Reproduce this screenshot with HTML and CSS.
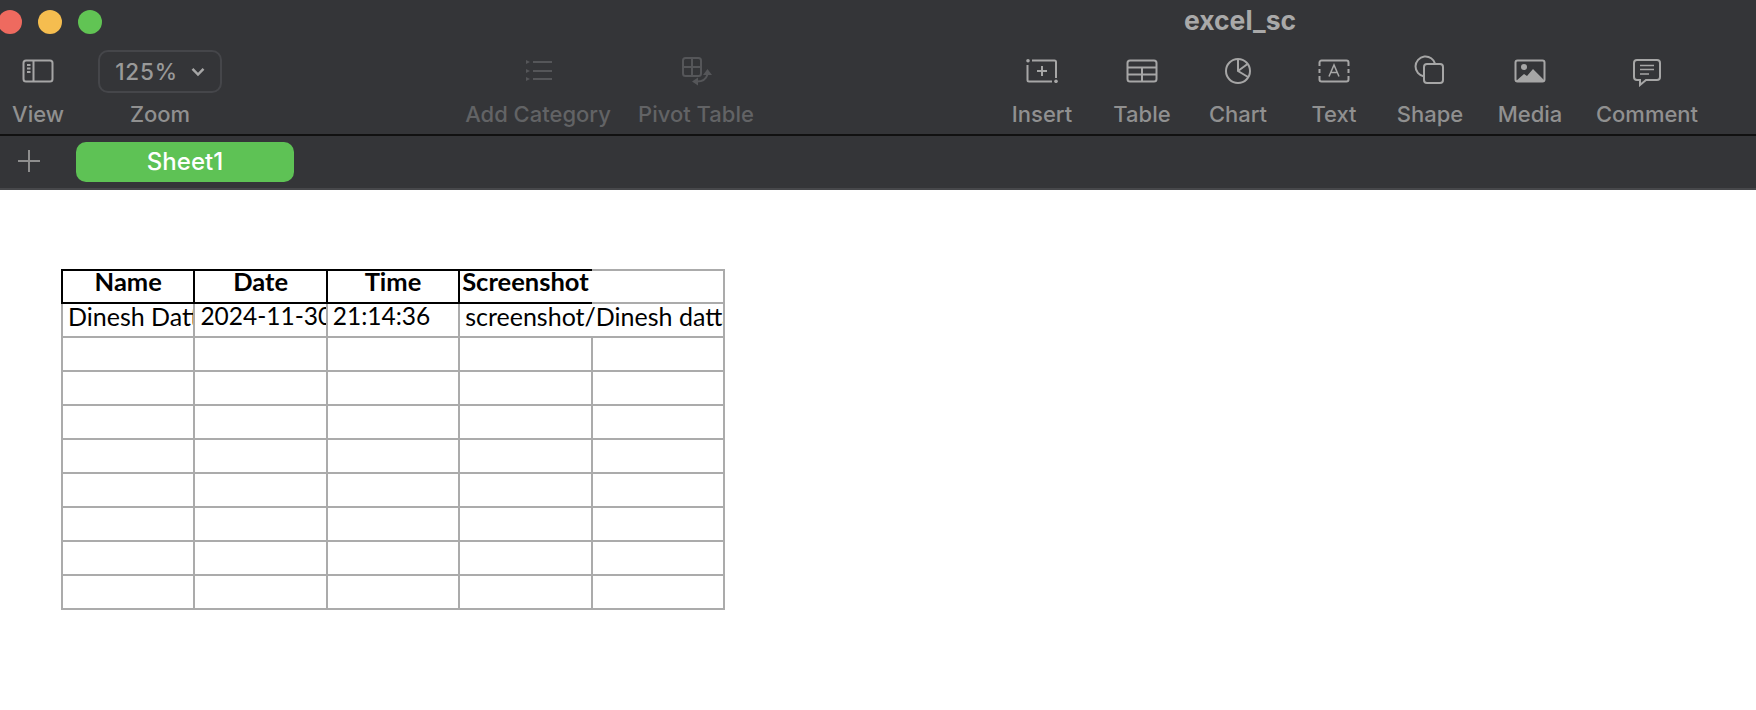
FILE: index.html
```html
<!DOCTYPE html>
<html lang="en">
<head>
    <meta charset="UTF-8">
    <meta name="viewport" content="width=device-width, initial-scale=1.0">
    <title>excel_sc</title>
    <link rel="stylesheet" href="styles.css">
</head>
<body>
    <header class="window-top">
        <div class="titlebar">
            <div class="lights">
                <span class="light red"></span>
                <span class="light yellow"></span>
                <span class="light green"></span>
            </div>
            <div class="doc-title">excel_sc</div>
        </div>
        <div class="toolbar">
            <div class="tool view-tool">
                <svg class="icon" viewBox="0 0 32 24">
                    <rect x="1.500" y="1.500" width="29" height="21" rx="2.500"/>
                    <path d="M11.500 1.500v21M5 6h3.500M5 9.500h3.500M5 13h3.500"/>
                </svg>
                <span class="tool-label">View</span>
            </div>
            <div class="tool zoom-tool">
                <div class="zoom-box">
                    <span>125%</span>
                    <svg class="chevron" viewBox="0 0 14 10"><path d="M1.500 1.800 7 7.500l5.500-5.700"/></svg>
                </div>
                <span class="tool-label">Zoom</span>
            </div>

            <div class="tool-group middle">
                <div class="tool muted add-category">
                    <svg class="icon" viewBox="0 0 32 24">
                        <path d="M11 3h19M11 12h19M11 20h19"/>
                        <path class="solid" d="M4 1l4 2-4 2zM4 10l4 2-4 2zM4 18l4 2-4 2z"/>
                    </svg>
                    <span class="tool-label">Add Category</span>
                </div>
                <div class="tool muted pivot">
                    <svg class="icon tall" viewBox="0 0 32 32">
                        <rect x="3" y="3" width="18" height="18" rx="2.500"/>
                        <path d="M12 3v18M3 12h18"/>
                        <path d="M17 26.500c5 0 9-2 10.500-7"/>
                        <path class="solid" d="M27.500 14l4.500 6h-9zM12 26.500l6-4v8z"/>
                    </svg>
                    <span class="tool-label">Pivot Table</span>
                </div>
            </div>

            <div class="tool-group right">
                <div class="tool">
                    <svg class="icon" viewBox="0 0 32 24">
                        <path d="M1.500 6v15a1.500 1.500 0 0 0 1.500 1.500h23M6 1.500h22.500a1.500 1.500 0 0 1 1.500 1.500v16"/>
                        <path d="M16 7v10M11 12h10"/>
                        <circle class="solid" cx="2" cy="1.800" r="1.800"/>
                        <circle class="solid" cx="30" cy="22.300" r="1.800"/>
                    </svg>
                    <span class="tool-label">Insert</span>
                </div>
                <div class="tool">
                    <svg class="icon" viewBox="0 0 32 24">
                        <rect x="1.500" y="1.500" width="29" height="21" rx="2.500"/>
                        <path d="M1.500 8.500h29M1.500 15.500h29M16 8.500v14"/>
                    </svg>
                    <span class="tool-label">Table</span>
                </div>
                <div class="tool">
                    <svg class="icon tall" viewBox="0 0 32 32">
                        <circle cx="16" cy="16" r="12"/>
                        <path d="M16 4v12l10 6M16 16l9.500-7"/>
                    </svg>
                    <span class="tool-label">Chart</span>
                </div>
                <div class="tool">
                    <svg class="icon" viewBox="0 0 32 24">
                        <path d="M1.500 7V3.500a2 2 0 0 1 2-2h25a2 2 0 0 1 2 2V7M1.500 17v3.500a2 2 0 0 0 2 2h25a2 2 0 0 0 2-2V17M1.500 10v4M30.500 10v4"/>
                        <path class="thin" d="M11 17.500 16 6l5 11.500M12.800 13.500h6.400"/>
                    </svg>
                    <span class="tool-label">Text</span>
                </div>
                <div class="tool">
                    <svg class="icon tall" viewBox="0 0 32 32">
                        <path d="M10 21.400A10 10 0 1 1 21.200 9"/>
                        <rect x="10" y="9" width="19" height="19" rx="3"/>
                    </svg>
                    <span class="tool-label">Shape</span>
                </div>
                <div class="tool">
                    <svg class="icon" viewBox="0 0 32 24">
                        <rect x="1.500" y="1.500" width="29" height="21" rx="2"/>
                        <circle class="solid" cx="10" cy="8" r="3"/>
                        <path class="solid" d="M2 22l8-7 3 2 6-7 11 11v1H2z"/>
                    </svg>
                    <span class="tool-label">Media</span>
                </div>
                <div class="tool">
                    <svg class="icon tall" viewBox="0 0 32 32">
                        <path d="M6 5h20a3 3 0 0 1 3 3v14a3 3 0 0 1-3 3H15l-6 5v-5H6a3 3 0 0 1-3-3V8a3 3 0 0 1 3-3z"/>
                        <path class="thin" d="M9 10.500h14M9 14.500h14M9 19h9"/>
                    </svg>
                    <span class="tool-label">Comment</span>
                </div>
            </div>
        </div>
        <div class="sheet-tabs">
            <svg class="add-sheet" viewBox="0 0 22 22"><path d="M11 0v22M0 11h22"/></svg>
            <div class="sheet-tab">Sheet1</div>
        </div>
    </header>

    <main class="canvas">
        <table class="sheet">
            <tbody>
                <tr class="head-row">
                    <th>Name</th>
                    <th>Date</th>
                    <th>Time</th>
                    <th class="spill">Screenshot</th>
                    <td class="spill-end"></td>
                </tr>
                <tr>
                    <td>Dinesh Datta</td>
                    <td class="num">2024-11-30</td>
                    <td class="num">21:14:36</td>
                    <td colspan="2">screenshot/Dinesh datta_2024-11-30.png</td>
                </tr>
                <tr><td></td><td></td><td></td><td></td><td></td></tr>
                <tr><td></td><td></td><td></td><td></td><td></td></tr>
                <tr><td></td><td></td><td></td><td></td><td></td></tr>
                <tr><td></td><td></td><td></td><td></td><td></td></tr>
                <tr><td></td><td></td><td></td><td></td><td></td></tr>
                <tr><td></td><td></td><td></td><td></td><td></td></tr>
                <tr><td></td><td></td><td></td><td></td><td></td></tr>
                <tr><td></td><td></td><td></td><td></td><td></td></tr>
            </tbody>
        </table>
    </main>
</body>
</html>
```

FILE: styles.css
```css
html, body { margin: 0; height: 100%; background: #fff; overflow: hidden; }
body { font-family: Inter, "Liberation Sans", sans-serif; }

.window-top { background: #343538; height: 190px; box-sizing: border-box; border-bottom: 2px solid #47484b; }

.titlebar { height: 44px; position: relative; display: flex; align-items: center; }
.lights { display: flex; gap: 16px; margin-left: -2px; }
.light { width: 24px; height: 24px; border-radius: 50%; }
.red { background: #ee6a5f; }
.yellow { background: #f5bd4f; }
.green { background: #61c454; }
.doc-title {
    position: absolute;
    left: 1170px;
    top: 4px;
    width: 140px;
    text-align: center;
    font-size: 26.500px;
    line-height: 32px;
    font-weight: 700;
    color: #a9a9a9;
}

.toolbar { display: flex; height: 92px; border-bottom: 2px solid #111; box-sizing: border-box; }
.tool { display: flex; flex-direction: column; align-items: center; color: #909090; }
.tool-label { font-size: 22px; font-weight: 500; line-height: 26px; white-space: nowrap; margin-top: auto; margin-bottom: 7px; }
.tool .icon { width: 32px; height: 24px; margin-top: 15px; fill: none; stroke: #a6a6a6; stroke-width: 2; }
.tool .icon.tall { height: 32px; margin-top: 11px; }
.icon .solid { fill: #a6a6a6; stroke: none; }
.icon .thin { stroke-width: 1.500; }

.view-tool { width: 50px; margin-left: 13px; }
.zoom-tool { width: 124px; margin-left: 35px; }
.zoom-box {
    width: 124px;
    height: 43px;
    margin-top: 6px;
    box-sizing: border-box;
    border: 2px solid #45464a;
    border-radius: 10px;
    display: flex;
    align-items: center;
    justify-content: center;
    gap: 13px;
    font-size: 22.500px;
    font-weight: 500;
    letter-spacing: 0.800px;
    color: #999;
}
.chevron { width: 14px; height: 10px; fill: none; stroke: #a6a6a6; stroke-width: 2.500; }

.tool-group { display: flex; }
.middle { margin-left: 244px; gap: 29px; }
.add-category { width: 144px; }
.pivot { width: 114px; }
.muted { color: #626365; }
.muted .icon { stroke: #555659; }
.muted .icon .solid { fill: #555659; }

.right { margin-left: 239px; display: grid; grid-template-columns: 100px 100px 92px 100px 92px 108px 126px; }

.sheet-tabs { height: 52px; display: flex; align-items: center; }
.add-sheet { width: 22px; height: 22px; margin: -3px 0 0 18px; fill: none; stroke: #8e8e8e; stroke-width: 2; }
.sheet-tab {
    width: 218px;
    height: 40px;
    margin-left: 36px;
    border-radius: 10px;
    background: #5ec255;
    color: #fff;
    font-size: 24px;
    font-weight: 500;
    line-height: 40px;
    text-align: center;
}

.canvas { padding: 79px 0 0 61px; }
.sheet {
    table-layout: fixed;
    border-collapse: collapse;
    width: 662px;
    font-family: Lato, "Liberation Sans", sans-serif;
    font-size: 25px;
    color: #000;
}
.sheet th, .sheet td {
    width: 132.400px;
    height: 34px;
    padding: 0 5px;
    box-sizing: border-box;
    border: 2px solid #ababab;
    white-space: nowrap;
    line-height: 24px;
    vertical-align: top;
    font-weight: 400;
    text-align: left;
}
.sheet td { overflow: hidden; }
.sheet .num { font-size: 24.500px; }
.sheet .head-row th { border-color: #000; text-align: center; font-weight: 700; font-size: 25.500px; line-height: 20px; height: 33px; }
.sheet .head-row td { height: 33px; }
.sheet .head-row .spill { border-right: none; text-align: left; padding-left: 2px; }
.sheet .head-row .spill-end { border-left: none; }
```
